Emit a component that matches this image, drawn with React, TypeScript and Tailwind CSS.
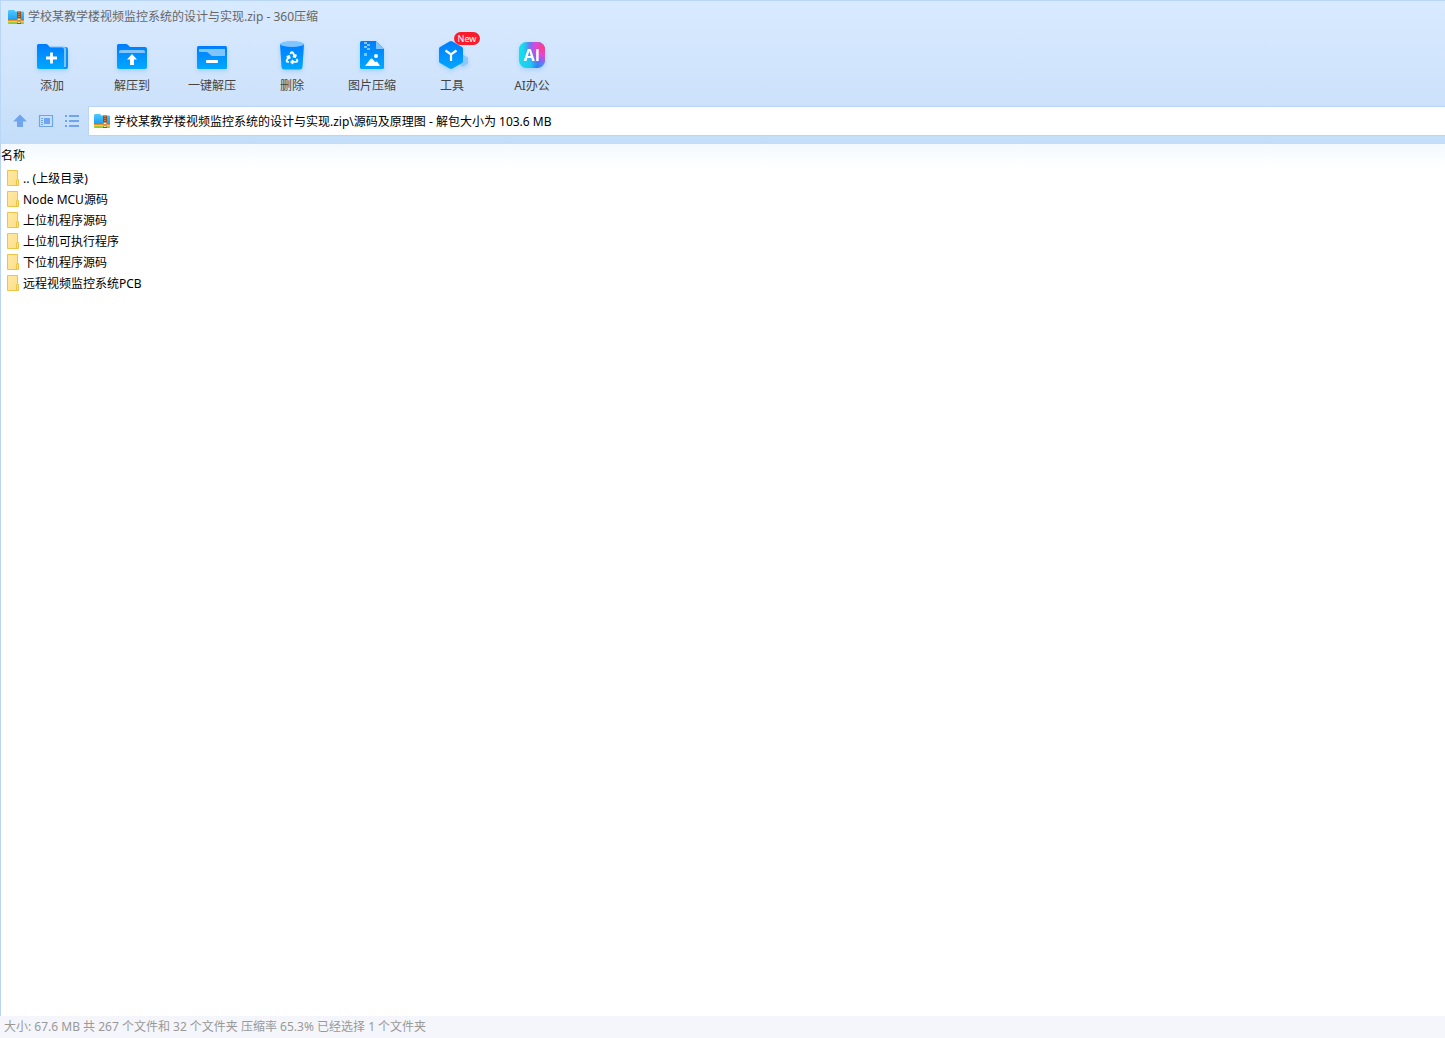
import type { ReactNode } from "react";

const archiveName = "学校某教学楼视频监控系统的设计与实现.zip";

const folders = [
    ".. (上级目录)",
    "Node MCU源码",
    "上位机程序源码",
    "上位机可执行程序",
    "下位机程序源码",
    "远程视频监控系统PCB",
];

// Shared gradients, referenced by id from the icons below
function IconDefs() {
    return (
        <svg width="0" height="0" className="absolute" aria-hidden="true">
            <defs>
                <linearGradient id="blue" x1="0" y1="0" x2="0" y2="1">
                    <stop offset="0" stopColor="#007cff" />
                    <stop offset="1" stopColor="#00a8ff" />
                </linearGradient>
                <linearGradient id="folder" x1="0" y1="0" x2="1" y2="1">
                    <stop offset="0" stopColor="#ffe9a6" />
                    <stop offset="1" stopColor="#ffdf85" />
                </linearGradient>
                <linearGradient id="archive" x1="0" y1="0" x2="0" y2="1">
                    <stop offset="0" stopColor="#4ccbff" />
                    <stop offset="1" stopColor="#1e9bee" />
                </linearGradient>
                <linearGradient id="ai" x1="0" y1="0.6" x2="1" y2="0.8">
                    <stop offset="0" stopColor="#12e0ea" />
                    <stop offset="0.5" stopColor="#22c4f2" />
                    <stop offset="0.75" stopColor="#2b7df5" />
                    <stop offset="1" stopColor="#4aa0f5" />
                </linearGradient>
                <radialGradient id="aiPink" cx="0.95" cy="0.2" r="0.8">
                    <stop offset="0" stopColor="#ff3f76" />
                    <stop offset="0.4" stopColor="#e046d8" />
                    <stop offset="0.7" stopColor="#8a60f0" stopOpacity="0.8" />
                    <stop offset="1" stopColor="#4a90f5" stopOpacity="0" />
                </radialGradient>
            </defs>
        </svg>
    );
}

function ArchiveIcon() {
    return (
        <svg width="16" height="16" viewBox="0 0 16 16" className="shrink-0" aria-hidden="true">
            <path d="M0 2.5Q0 1 1.2 1H6l1.5 1.500H15q1 0 1 1v8H0z" fill="url(#archive)" />
            <path d="M0 11h16v1.500H0z" fill="#f58a1f" />
            <path d="M0 12.500h16V14q0 1-1 1H1q-1 0-1-1z" fill="#8acb38" />
            <path d="M0 12.300h16v.9H0z" fill="#ffe04a" />
            <path d="M9 2.500h4V15H9z" fill="#9a4f1c" />
            <path d="M11 3v6" stroke="#e0b071" strokeDasharray="1 1" />
            <path d="M9.500 9.500h3v4.500h-3z" fill="#ffe9a0" />
            <path d="M10.500 11h1v2h-1z" fill="#8b4a1c" />
        </svg>
    );
}

function FolderIcon() {
    return (
        <svg width="14" height="16" viewBox="0 0 14 16" className="shrink-0" aria-hidden="true">
            <path d="M1.500.5h10v9h1v6h-11z" fill="url(#folder)" stroke="#edc447" />
            <path d="M10.500 15v-5l1-1" fill="none" stroke="#edc447" />
        </svg>
    );
}

function ToolIcon({ children }: { children: ReactNode }) {
    return (
        <svg
            width="36"
            height="36"
            viewBox="0 0 36 36"
            className="drop-shadow-[0_2px_2px_rgba(0,130,255,0.2)]"
            aria-hidden="true"
        >
            {children}
        </svg>
    );
}

const tools = [
    {
        label: "添加",
        icon: (
            <ToolIcon>
                <path d="M24 8h8q2 0 2 2.500V28q0 2-2 2h-8z" fill="#078fff" />
                <path d="M14 7.500h15q3 0 3 3V28h-5V9H14z" fill="#80c5ff" />
                <path d="M3 6.500Q3 5 4.500 5H12q1 0 2 1l2 2.500h12q2 0 2 2V28q0 2 2 2H5q-2 0-2-2z" fill="url(#blue)" />
                <path d="M17.500 13.500v11M12 19h11" stroke="#fff" strokeWidth="2.800" />
            </ToolIcon>
        ),
    },
    {
        label: "解压到",
        icon: (
            <ToolIcon>
                <path d="M3 6.500Q3 5 4.500 5H12q1 0 2 1l2 2h15q2 0 2 2v18q0 2-2 2H5q-2 0-2-2z" fill="url(#blue)" />
                <path d="M5 14v-1.500Q5 11 7 11h22q2 0 2 1.500V14z" fill="#80c5ff" />
                <path d="M18 15l5 5.500h-3V26h-4v-5.500h-3z" fill="#fff" />
            </ToolIcon>
        ),
    },
    {
        label: "一键解压",
        icon: (
            <ToolIcon>
                <rect x="3" y="7" width="30" height="23" rx="1.500" fill="url(#blue)" />
                <path d="M5 10h26v7H19q-1.500 0-3-1.500L13 13H5z" fill="#80c5ff" />
                <rect x="12" y="21" width="12" height="3" rx=".8" fill="#fff" />
            </ToolIcon>
        ),
    },
    {
        label: "删除",
        icon: (
            <ToolIcon>
                <path d="M6 5h24l-1.500 23q-.3 2.500-3 2.500h-15q-2.700 0-3-2.500z" fill="url(#blue)" />
                <ellipse cx="18" cy="5" rx="12" ry="3" fill="#80c5ff" />
                <g transform="translate(10.800 11.500) scale(.6)" fill="none" stroke="#fff" strokeWidth="3.200">
                    <path d="M7 19H4.800a1.800 1.800 0 0 1-1.500-2.700L7.200 9.500" />
                    <path d="M11 19h8.200a1.800 1.800 0 0 0 1.500-2.700l-1.200-2.100" />
                    <path d="m14 16-3 3 3 3" />
                    <path d="M8.300 13.600 7.200 9.500l-4.100 1.100" />
                    <path d="m9.300 5.800 1.100-1.900a1.800 1.800 0 0 1 3.100 0l4 6.900" />
                    <path d="m13.400 9.600 4.100 1.100 1.100-4.100" />
                </g>
            </ToolIcon>
        ),
    },
    {
        label: "图片压缩",
        icon: (
            <ToolIcon>
                <path d="M6 3.500Q6 2 7.500 2H22l8 8v18.500q0 1.500-1.500 1.500h-21Q6 30 6 28.500z" fill="url(#blue)" />
                <path d="M22 2l8 8h-8z" fill="#80c5ff" />
                <path d="M10 3h3v2h-3zM13 5h3v2h-3zM10 7h3v2h-3zM13 9h3v2h-3zM10 14h3v3h-3z" fill="#80c5ff" />
                <circle cx="22" cy="17" r="2" fill="#fff" />
                <path d="M11 27l5.500-7q1-1 2 0l2.500 3q1.500-1 2.500 0L26 27z" fill="#fff" />
            </ToolIcon>
        ),
    },
    {
        label: "工具",
        badge: "New",
        icon: (
            <ToolIcon>
                <path d="M29 15.500l5 3v6l-5 3-5-3v-6z" fill="#8cc8fb" />
                <path d="M15.500 2.400q1.500-.8 3 0L28 8q1 .6 1 2v12q0 1.400-1 2l-9.500 5.600q-1.500.8-3 0L6 24q-1-.6-1-2V10q0-1.400 1-2z" fill="url(#blue)" />
                <path d="M11.500 11.500l5.500 4 5.500-4M17 15.500V22" fill="none" stroke="#fff" strokeWidth="2.200" />
            </ToolIcon>
        ),
    },
    {
        label: "AI办公",
        icon: (
            <ToolIcon>
                <rect x="5" y="3" width="26" height="26" rx="7.500" fill="url(#ai)" />
                <rect x="5" y="3" width="26" height="26" rx="7.500" fill="url(#aiPink)" />
                <text x="18" y="22" textAnchor="middle" fontSize="16" fontWeight="700" fill="#fff" fontFamily="Open Sans, sans-serif">
                    AI
                </text>
            </ToolIcon>
        ),
    },
];

const navButtons = [
    {
        label: "向上",
        icon: <path d="M8 1.500L15 8.500h-4V14H5V8.500H1z" fill="#6fa5ee" />,
    },
    {
        label: "预览",
        icon: (
            <>
                <path d="M1.500 2.500h13v11h-13z" fill="none" stroke="#6fa5ee" strokeWidth="1.200" />
                <path d="M6 5h6v6H6zM3 5h2v1H3zM3 7h2v1H3zM3 9h2v1H3zM3 11h2v1H3z" fill="#6fa5ee" />
            </>
        ),
    },
    {
        label: "列表",
        icon: <path d="M1 2h2v2H1zM5 2h10v2H5zM1 7h2v2H1zM5 7h10v2H5zM1 12h2v2H1zM5 12h10v2H5z" fill="#6fa5ee" />,
    },
];

function TitleBar() {
    return (
        <div className="flex h-8 items-center gap-1 pl-[7px] text-[#666]">
            <ArchiveIcon />
            <h1>{archiveName} - 360压缩</h1>
        </div>
    );
}

function Toolbar() {
    return (
        <div className="flex h-[73px] items-start pt-1.5 pl-[11px] text-[#444]">
            {tools.map((tool) => (
                <button key={tool.label} type="button" className="relative flex w-20 flex-col items-center gap-px">
                    {tool.icon}
                    <span className="leading-5">{tool.label}</span>
                    {tool.badge && (
                        <span className="absolute -top-[7px] left-[42px] h-[13px] w-[26px] rounded-full bg-[#fb1c2b] text-center text-[9px] leading-[13px] text-white">
                            {tool.badge}
                        </span>
                    )}
                </button>
            ))}
        </div>
    );
}

function AddressBar() {
    return (
        <div className="flex items-center pb-2 pl-[11px]">
            <div className="flex w-[76px] shrink-0 gap-2.5">
                {navButtons.map((button) => (
                    <button key={button.label} type="button" aria-label={button.label}>
                        <svg width="16" height="16" viewBox="0 0 16 16" aria-hidden="true">
                            {button.icon}
                        </svg>
                    </button>
                ))}
            </div>
            <div className="flex h-[30px] flex-1 items-center gap-1 border border-r-0 border-[#b9d6f7] bg-white pl-[5px]">
                <ArchiveIcon />
                <input
                    aria-label="路径"
                    readOnly
                    value={`${archiveName}\\源码及原理图 - 解包大小为 103.6 MB`}
                    className="h-full min-w-0 flex-1 bg-transparent text-black outline-none"
                />
            </div>
        </div>
    );
}

function FileList() {
    return (
        <main className="flex-1 border-l border-[#b9d3f5] bg-linear-to-b from-[#f3f9ff] to-white to-[24px]">
            <table className="w-full border-collapse text-left text-black">
                <thead>
                    <tr>
                        <th className="h-6 font-normal">名称</th>
                    </tr>
                </thead>
                <tbody>
                    {folders.map((name) => (
                        <tr key={name}>
                            <td className="h-[21px] pl-[5px]">
                                <div className="flex items-start gap-[3px] leading-[17px]">
                                    <FolderIcon />
                                    <span>{name}</span>
                                </div>
                            </td>
                        </tr>
                    ))}
                </tbody>
            </table>
        </main>
    );
}

export default function App() {
    return (
        <div className="flex min-h-screen flex-col bg-white font-['Noto_Sans','Noto_Sans_CJK_SC',sans-serif] text-[12px] leading-4">
            <IconDefs />
            <header className="border-t border-l border-[#b9d6f5] bg-linear-to-b from-[#d8eaff] via-[#cde2fb] via-70% to-[#c3ddf9]">
                <TitleBar />
                <Toolbar />
                <AddressBar />
            </header>
            <FileList />
            <footer className="bg-[#f4f6fb] pl-1 leading-[22px] text-[#999]">
                大小: 67.6 MB 共 267 个文件和 32 个文件夹 压缩率 65.3% 已经选择 1 个文件夹
            </footer>
        </div>
    );
}
